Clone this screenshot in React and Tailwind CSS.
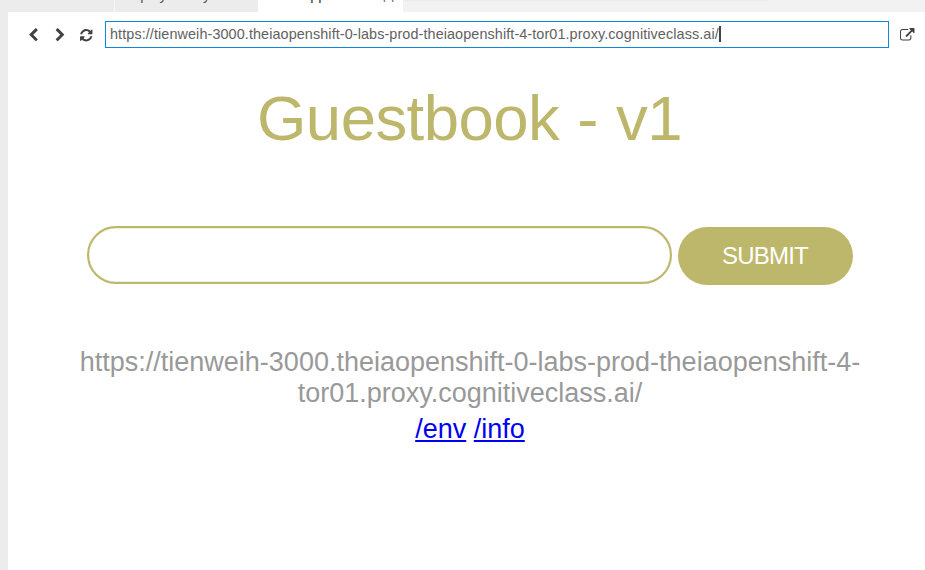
const icons = {
  left: "M1427 301l-531 531 531 531q19 19 19 45t-19 45l-166 166q-19 19-45 19t-45-19l-742-742q-19-19-19-45t19-45l742-742q19-19 45-19t45 19l166 166q19 19 19 45t-19 45z",
  right: "M1363 877l-742 742q-19 19-45 19t-45-19l-166-166q-19-19-19-45t19-45l531-531-531-531q-19-19-19-45t19-45l166-166q19-19 45-19t45 19l742 742q19 19 19 45t-19 45z",
  refresh: "M1639 1056q0 5-1 7-64 268-268 434.5t-478 166.5q-146 0-282.5-55t-243.5-157l-129 129q-19 19-45 19t-45-19-19-45v-448q0-26 19-45t45-19h448q26 0 45 19t19 45-19 45l-137 137q71 66 161 102t187 36q134 0 250-65t186-179q11-17 53-117 8-23 30-23h192q13 0 22.5 9.5t9.5 22.5zm25-800v448q0 26-19 45t-45 19h-448q-26 0-45-19t-19-45 19-45l138-138q-148-137-349-137-134 0-250 65t-186 179q-11 17-53 117-8 23-30 23h-199q-13 0-22.5-9.5t-9.5-22.5v-7q65-268 270-434.5t480-166.5q146 0 284 55.5t245 156.5l130-129q19-19 45-19t45 19 19 45z",
  external: "M1408 928v320q0 119-84.5 203.5t-203.5 84.5h-832q-119 0-203.5-84.5t-84.5-203.5v-832q0-119 84.5-203.5t203.5-84.5h704q14 0 23 9t9 23v64q0 14-9 23t-23 9h-704q-66 0-113 47t-47 113v832q0 66 47 113t113 47h832q66 0 113-47t47-113v-320q0-14 9-23t23-9h64q14 0 23 9t9 23zm384-864v512q0 26-19 45t-45 19-45-19l-176-176-652 652q-10 10-23 10t-23-10l-114-114q-10-10-10-23t10-23l652-652-176-176q-19-19-19-45t19-45 45-19h512q26 0 45 19t19 45z",
};

function Icon({ name, className }) {
  return (
    <svg viewBox="0 0 1792 1792" className={`shrink-0 fill-[#424242] ${className}`}>
      <path d={icons[name]} />
    </svg>
  );
}

const url = "https://tienweih-3000.theiaopenshift-0-labs-prod-theiaopenshift-4-tor01.proxy.cognitiveclass.ai/";

export default function App() {
  return (
    <div className="flex h-[570px] w-[925px] flex-col overflow-hidden bg-white font-['Liberation_Sans',Arial,sans-serif]">
      <div className="flex h-3 shrink-0 bg-[#f2f2f2] text-[14.5px] leading-4 text-[#555]">
        <div className="w-[114px] bg-[#ececec]" />
        <div className="flex h-3 w-36 items-end overflow-hidden border-l border-[#f5f5f5] bg-[#ececec] pb-[9px] pl-[9px]">
          <span>deployment.yml</span>
        </div>
        <div className="flex h-3 w-[145px] items-end overflow-hidden bg-white pb-[9px] pl-[10px] text-[#333]">
          <span className="whitespace-nowrap">Your Application</span>
          <span className="mb-px ml-auto mr-1 text-[#777]">pp</span>
        </div>
        <div className="h-0.5 w-[365px] bg-linear-to-b from-[#eaeaea] to-[#f2f2f2]" />
      </div>
      <div className="flex min-h-0 flex-1">
        <div className="w-2 shrink-0 bg-[#ececec]" />
        <div className="flex flex-1 flex-col">
          <div className="flex h-[46px] shrink-0 items-start pt-[9px]">
            <div className="flex h-[27px] w-[97px] items-center pt-px">
              <Icon name="left" className="ml-[18px] size-[14.5px]" />
              <Icon name="right" className="ml-3 size-[14.5px]" />
              <Icon name="refresh" className="ml-3 size-[14.5px]" />
            </div>
            <div className="flex h-[27px] w-[784px] items-center border border-[#0f87dc] pb-0.5 pl-1 text-[14.4px] leading-4 tracking-[0.095px] text-[#616161]">
              <span>{url}</span>
              <span className="h-4 w-0.5 bg-[#444]" />
            </div>
            <div className="flex h-[27px] items-center pt-px">
              <Icon name="external" className="ml-[11px] size-[14.5px]" />
            </div>
          </div>
          <div className="flex flex-col items-center pl-1.5">
            <h1 className="mt-6 text-[63.5px] leading-[72px] tracking-[-0.55px] text-[#bdb76b] [word-spacing:1px]">Guestbook - v1</h1>
            <div className="mt-[72px] flex gap-1.5">
              <div className="h-[58px] w-[585px] rounded-full border-2 border-[#bdb76b] shadow-[inset_0_0_0_0.5px_#bdb76b66]" />
              <button className="mt-px h-[58px] w-[175px] rounded-full bg-[#bdb76b] text-[24px] tracking-[-0.8px] text-white">SUBMIT</button>
            </div>
            <p className="mt-[62px] w-[800px] pl-px text-center text-[27px] leading-[31px] text-[#999]">{url}</p>
            <p className="mt-[5px] pl-px text-[27px] leading-[31px] text-[#0000ee]">
              <a className="underline">/env</a> <a className="underline">/info</a>
            </p>
          </div>
        </div>
      </div>
    </div>
  );
}
